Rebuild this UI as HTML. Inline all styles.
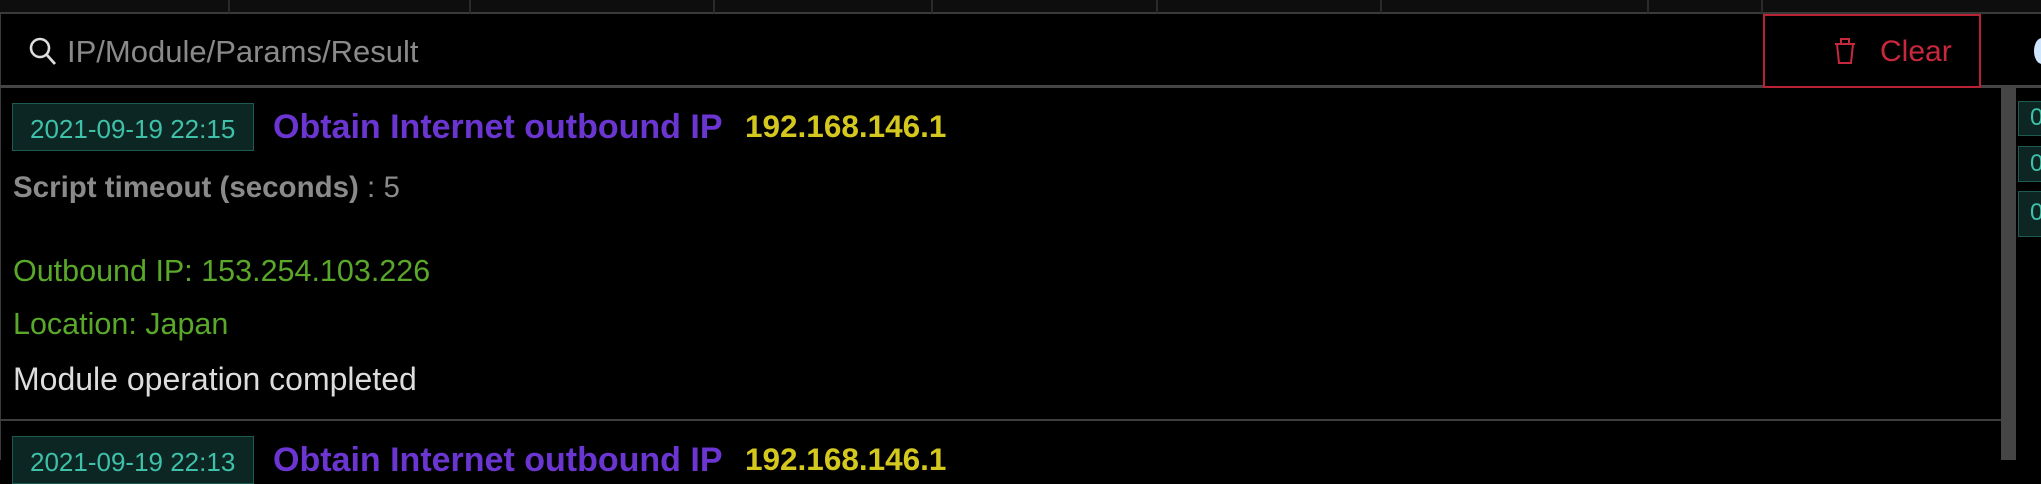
<!DOCTYPE html>
<html><head><style>
html,body{margin:0;padding:0;background:#000;width:2041px;height:460px;overflow:hidden;font-family:"Liberation Sans",sans-serif}
.a{position:absolute}
.c{position:absolute;white-space:nowrap;line-height:1}
.div{position:absolute;top:0;width:2px;height:13px;background:#2a2a2a}
</style></head><body>
<div class="a" style="left:0;top:0;width:2041px;height:13px;background:#0e0e0e"></div>
<div class="a" style="left:0;top:12px;width:2041px;height:2px;background:#3a3a3a"></div>
<div class="div" style="left:228px"></div><div class="div" style="left:469px"></div><div class="div" style="left:713px"></div><div class="div" style="left:931px"></div><div class="div" style="left:1156px"></div><div class="div" style="left:1380px"></div><div class="div" style="left:1647px"></div><div class="div" style="left:1761px"></div>
<!-- search -->
<div class="a" style="left:0;top:14px;width:1px;height:446px;background:#3a3a3a"></div>
<svg class="a" style="left:28px;top:36px" width="30" height="30" viewBox="0 0 30 30"><circle cx="12" cy="12" r="9" fill="none" stroke="#ddd" stroke-width="2.6"/><line x1="18.5" y1="18.5" x2="27" y2="28" stroke="#ddd" stroke-width="2.8"/></svg>
<div class="c" style="left:67px;top:36px;font-size:31px;color:#8a8a8a">IP/Module/Params/Result</div>
<div class="a" style="left:0;top:85px;width:2041px;height:3px;background:#454545"></div>
<!-- clear -->
<div class="a" style="left:1763px;top:14px;width:214px;height:70px;border:2px solid #b82234;background:#000"></div>
<svg class="a" style="left:1832px;top:36px" width="26" height="30" viewBox="0 0 26 30"><path d="M3 8 H23 M9 8 V3 H17 V8 M5 8 L7 27 H19 L21 8" fill="none" stroke="#c8283c" stroke-width="2"/></svg>
<div class="c" style="left:1880px;top:37px;font-size:30px;color:#c8283c">Clear</div>
<div class="a" style="left:2034px;top:38px;width:16px;height:26px;border-radius:50%;background:#cfe6ff"></div>
<!-- scrollbar -->
<div class="a" style="left:2001px;top:88px;width:15px;height:372px;background:#454545"></div>
<div class="a" style="left:2018px;top:101px;width:30px;height:33px;background:#0d2623;border:1px solid #1f5a50"></div>
<div class="a" style="left:2018px;top:146px;width:30px;height:34px;background:#0d2623;border:1px solid #1f5a50"></div>
<div class="a" style="left:2018px;top:191px;width:30px;height:44px;background:#0d2623;border:1px solid #1f5a50"></div>
<div class="c" style="left:2030px;top:106px;font-size:24px;color:#3fc0a8">0</div>
<div class="c" style="left:2030px;top:152px;font-size:24px;color:#3fc0a8">0</div>
<div class="c" style="left:2030px;top:201px;font-size:24px;color:#3fc0a8">0</div>
<!-- entry 1 -->
<div class="a" style="left:12px;top:103px;width:240px;height:46px;background:#0c2624;border:1px solid #1f5a50"></div>
<div class="c" style="left:30px;top:116px;font-size:26px;color:#3fc0a8">2021-09-19 22:15</div>
<div class="c" style="left:273px;top:110px;font-size:34px;font-weight:bold;color:#6a35d0">Obtain Internet outbound IP</div>
<div class="c" style="left:745px;top:111px;font-size:31.5px;font-weight:bold;color:#d4c81e">192.168.146.1</div>
<div class="c" style="left:13px;top:173px;font-size:29.5px;color:#8a8a8a"><b>Script timeout (seconds)</b> : 5</div>
<div class="c" style="left:13px;top:256px;font-size:30.5px;color:#5aa82a">Outbound IP: 153.254.103.226</div>
<div class="c" style="left:13px;top:309px;font-size:30.5px;color:#5aa82a">Location: Japan</div>
<div class="c" style="left:13px;top:363px;font-size:32px;color:#dddddd">Module operation completed</div>
<div class="a" style="left:0;top:419px;width:2001px;height:2px;background:#3e3e3e"></div>
<!-- entry 2 -->
<div class="a" style="left:12px;top:436px;width:240px;height:46px;background:#0c2624;border:1px solid #1f5a50"></div>
<div class="c" style="left:30px;top:449px;font-size:26px;color:#3fc0a8">2021-09-19 22:13</div>
<div class="c" style="left:273px;top:443px;font-size:34px;font-weight:bold;color:#6a35d0">Obtain Internet outbound IP</div>
<div class="c" style="left:745px;top:444px;font-size:31.5px;font-weight:bold;color:#d4c81e">192.168.146.1</div>
</body></html>
